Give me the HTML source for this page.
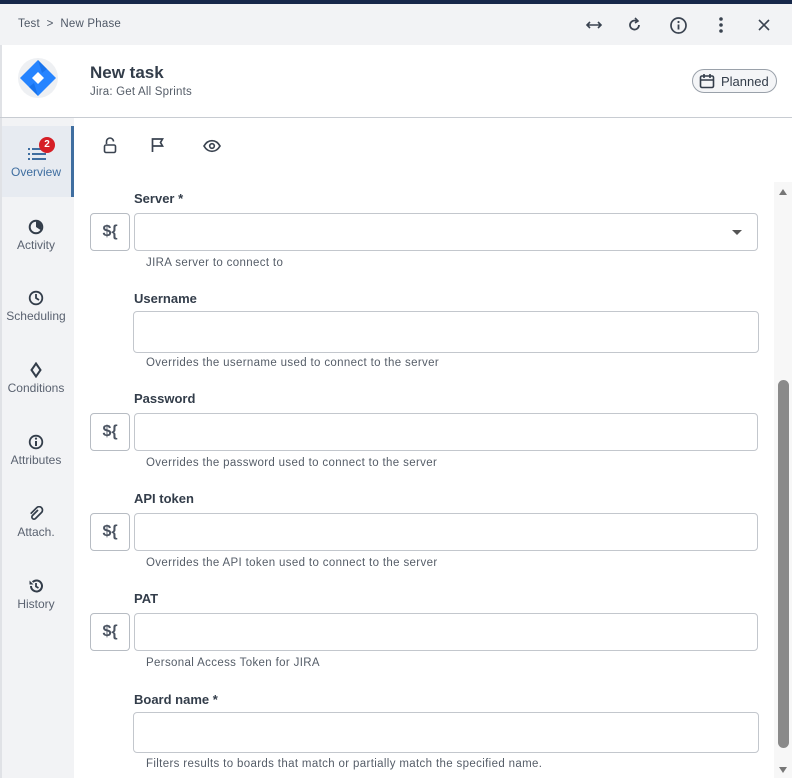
<!DOCTYPE html>
<html><head><meta charset="utf-8"><style>
*{box-sizing:border-box;margin:0;padding:0}
body{width:792px;height:778px;overflow:hidden;background:#fff;font-family:"Liberation Sans",sans-serif;color:#333d4a;position:relative}
.a{position:absolute}
.lbl{position:absolute;left:134px;font-size:13px;font-weight:bold;color:#333d4a}
.inp{position:absolute;border:1px solid #c3c7cd;border-radius:4px;background:#fff}
.help{position:absolute;left:146px;font-size:11.5px;letter-spacing:0.35px;color:#555d68}
.btn{position:absolute;left:90px;width:40px;height:38px;border:1px solid #b7bcc3;border-radius:4px;font-size:16px;font-weight:bold;color:#4a5361;text-align:center;line-height:36px}
.nav{position:absolute;left:0;width:72px;text-align:center;font-size:12px;color:#5a6270}
.nav svg{display:block;margin:0 auto 3px}
</style></head><body>
<div class="a" style="left:0;top:0;width:792px;height:4px;background:#17284a"></div>
<div class="a" style="left:0;top:4px;width:792px;height:41px;background:#f2f3f5"></div>
<div class="a" style="left:18px;top:18px;font-size:11.5px;color:#4f5866;letter-spacing:0.2px">Test &nbsp;&gt;&nbsp; New Phase</div>
<svg class="a" style="left:585px;top:18px" width="18" height="14" viewBox="0 0 18 14"><path d="M2 7h14M5 4L2 7l3 3M13 4l3 3-3 3" stroke="#3a4350" stroke-width="1.6" fill="none"/></svg>
<svg class="a" style="left:626px;top:16px" width="18" height="18" viewBox="0 0 18 18"><path d="M13 9a4.5 4.5 0 1 1-2.5-4" stroke="#3a4350" stroke-width="1.8" fill="none"/><path d="M9 2l3 3-3 2" stroke="#3a4350" stroke-width="1.6" fill="none"/></svg>
<svg class="a" style="left:669px;top:16px" width="19" height="19" viewBox="0 0 19 19"><circle cx="9.5" cy="9.5" r="7.5" stroke="#3a4350" stroke-width="1.7" fill="none"/><path d="M9.5 8.5v5" stroke="#3a4350" stroke-width="1.8"/><circle cx="9.5" cy="6" r="1.1" fill="#3a4350"/></svg>
<svg class="a" style="left:718px;top:16px" width="6" height="18"><circle cx="3" cy="3" r="1.8" fill="#3a4350"/><circle cx="3" cy="9" r="1.8" fill="#3a4350"/><circle cx="3" cy="15" r="1.8" fill="#3a4350"/></svg>
<svg class="a" style="left:758px;top:19px" width="12" height="12"><path d="M1 1l10 10M11 1L1 11" stroke="#3a4350" stroke-width="1.6"/></svg>

<div class="a" style="left:0;top:45px;width:2px;height:733px;background:#e0e2e6"></div>
<svg class="a" style="left:18px;top:58px" width="40" height="40" viewBox="0 0 40 40"><circle cx="20" cy="20" r="20" fill="#eef0f3"/><path d="M20 2L38 20 20 38 2 20z" fill="#2684ff"/><path d="M20 14l6 6-6 6-6-6z" fill="#fff"/><path d="M20 2L29 11 24 15z M20 38L11 29 16 25z" fill="#0052cc" opacity=".35"/></svg>
<div class="a" style="left:90px;top:63px;font-size:17px;font-weight:bold;color:#333d4a">New task</div>
<div class="a" style="left:90px;top:86px;font-size:11.5px;color:#555d68;letter-spacing:0.2px">Jira: Get All Sprints</div>
<div class="a" style="left:692px;top:69px;width:85px;height:24px;border:1px solid #9aa1aa;border-radius:12px;background:#f4f5f7"></div>
<svg class="a" style="left:699px;top:73px" width="16" height="16" viewBox="0 0 16 16"><rect x="1.5" y="3" width="13" height="11.5" rx="1.5" stroke="#333d4a" stroke-width="1.6" fill="none"/><path d="M1.5 7h13M5 1v4M11 1v4" stroke="#333d4a" stroke-width="1.6"/></svg>
<div class="a" style="left:721px;top:74px;font-size:13px;color:#333d4a">Planned</div>
<div class="a" style="left:0;top:117px;width:792px;height:1px;background:#c8ccd2"></div>

<div class="a" style="left:2px;top:118px;width:72px;height:660px;background:#f2f3f5"></div>
<div class="a" style="left:2px;top:126px;width:69px;height:71px;background:#e7ebf1"></div>
<div class="a" style="left:71px;top:126px;width:3px;height:71px;background:#3f6ea0"></div>
<svg class="a" style="left:28px;top:147px" width="18" height="14"><g fill="#3f6ea0"><rect x="0" y="1" width="2" height="2"/><rect x="4" y="1" width="14" height="2"/><rect x="0" y="6" width="2" height="2"/><rect x="4" y="6" width="14" height="2"/><rect x="0" y="11" width="2" height="2"/><rect x="4" y="11" width="14" height="2"/></g></svg>
<div class="a" style="left:39px;top:137px;width:16px;height:16px;border-radius:8px;background:#d61f26;color:#fff;font-size:10px;font-weight:bold;text-align:center;line-height:16px">2</div>
<div class="nav" style="top:165px;color:#3f6ea0">Overview</div>
<div class="nav" style="top:219px"><svg width="16" height="16"><circle cx="8" cy="8" r="6.3" stroke="#333d4a" stroke-width="2" fill="none"/><path d="M8 8V2.5A5.5 5.5 0 0 1 12.5 11z" fill="#333d4a"/></svg>Activity</div>
<div class="nav" style="top:290px"><svg width="16" height="16"><circle cx="8" cy="8" r="6.3" stroke="#333d4a" stroke-width="1.8" fill="none"/><path d="M8 4v4l3 2" stroke="#333d4a" stroke-width="1.8" fill="none"/></svg>Scheduling</div>
<div class="nav" style="top:362px"><svg width="16" height="16"><path d="M8 1.5l4.5 6.5L8 14.5 3.5 8z" stroke="#333d4a" stroke-width="2" fill="none"/></svg>Conditions</div>
<div class="nav" style="top:434px"><svg width="16" height="16"><circle cx="8" cy="8" r="6.3" stroke="#333d4a" stroke-width="1.8" fill="none"/><path d="M8 7v5" stroke="#333d4a" stroke-width="2"/><circle cx="8" cy="4.6" r="1.1" fill="#333d4a"/></svg>Attributes</div>
<div class="nav" style="top:506px"><svg width="16" height="16"><path d="M10 4L4.5 9.5a2 2 0 0 0 3 3l6-6a3.3 3.3 0 0 0-4.8-4.8L2.7 7.7" stroke="#333d4a" stroke-width="1.7" fill="none"/></svg>Attach.</div>
<div class="nav" style="top:578px"><svg width="16" height="16"><path d="M3 8a5.5 5.5 0 1 0 1.6-3.9" stroke="#333d4a" stroke-width="2" fill="none"/><path d="M1.5 2.5v4h4z" fill="#333d4a"/><path d="M8 5v3.5l2.5 1.5" stroke="#333d4a" stroke-width="1.8" fill="none"/></svg>History</div>

<svg class="a" style="left:102px;top:137px" width="16" height="17"><path d="M4.5 7V4.5a3.5 3.5 0 0 1 7 0" stroke="#3a4350" stroke-width="1.6" fill="none"/><rect x="2.5" y="8" width="11" height="7.5" rx="1.5" stroke="#3a4350" stroke-width="1.6" fill="none"/></svg>
<svg class="a" style="left:150px;top:137px" width="16" height="16"><path d="M2.5 15V2h10l-2 3.5 2 3.5h-10" stroke="#3a4350" stroke-width="1.7" fill="none"/></svg>
<svg class="a" style="left:203px;top:139px" width="18" height="14"><path d="M1 7c2-3.5 4.8-5.3 8-5.3S15 3.5 17 7c-2 3.5-4.8 5.3-8 5.3S3 10.5 1 7z" stroke="#3a4350" stroke-width="1.7" fill="none"/><circle cx="9" cy="7" r="2.3" stroke="#3a4350" stroke-width="1.6" fill="none"/></svg>

<div class="lbl" style="top:191px">Server *</div>
<div class="btn" style="top:213px">${</div>
<div class="inp" style="left:134px;top:213px;width:624px;height:38px"></div>
<div class="a" style="left:732px;top:230px;width:0;height:0;border-left:5px solid transparent;border-right:5px solid transparent;border-top:5px solid #555"></div>
<div class="help" style="top:257px">JIRA server to connect to</div>

<div class="lbl" style="top:291px">Username</div>
<div class="inp" style="left:133px;top:311px;width:626px;height:42px"></div>
<div class="help" style="top:357px">Overrides the username used to connect to the server</div>

<div class="lbl" style="top:391px">Password</div>
<div class="btn" style="top:413px">${</div>
<div class="inp" style="left:134px;top:413px;width:624px;height:38px"></div>
<div class="help" style="top:457px">Overrides the password used to connect to the server</div>

<div class="lbl" style="top:491px">API token</div>
<div class="btn" style="top:513px">${</div>
<div class="inp" style="left:134px;top:513px;width:624px;height:38px"></div>
<div class="help" style="top:557px">Overrides the API token used to connect to the server</div>

<div class="lbl" style="top:591px">PAT</div>
<div class="btn" style="top:613px">${</div>
<div class="inp" style="left:134px;top:613px;width:624px;height:38px"></div>
<div class="help" style="top:657px">Personal Access Token for JIRA</div>

<div class="lbl" style="top:692px">Board name *</div>
<div class="inp" style="left:133px;top:712px;width:626px;height:41px"></div>
<div class="help" style="top:758px">Filters results to boards that match or partially match the specified name.</div>

<div class="a" style="left:774px;top:182px;width:18px;height:596px;background:#f7f7f7"></div>
<div class="a" style="left:779px;top:189px;width:0;height:0;border-left:4px solid transparent;border-right:4px solid transparent;border-bottom:6px solid #777"></div>
<div class="a" style="left:778px;top:380px;width:11px;height:368px;border-radius:6px;background:#8a8a8a"></div>
<div class="a" style="left:779px;top:767px;width:0;height:0;border-left:4px solid transparent;border-right:4px solid transparent;border-top:6px solid #777"></div>
</body></html>
